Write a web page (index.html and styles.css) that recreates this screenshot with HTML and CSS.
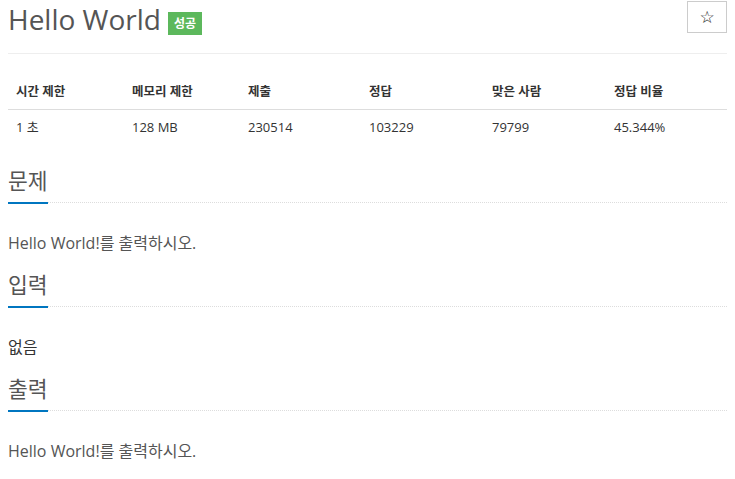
FILE: index.html
```html
<!DOCTYPE html>
<html lang="ko">
<head>
<meta charset="utf-8">
<title>Hello World</title>
<link rel="stylesheet" href="styles.css">
</head>
<body>
<div class="page">
  <div class="page-header">
    <h1 class="title">
      <span class="title-text">Hello World</span>
      <span class="badge">성공</span>
    </h1>
    <button class="star-btn" type="button" aria-label="즐겨찾기">☆</button>
  </div>

  <table class="info-table">
    <colgroup>
      <col class="c1"><col class="c2"><col class="c3"><col class="c4"><col class="c5"><col class="c6">
    </colgroup>
    <thead>
      <tr>
        <th>시간 제한</th>
        <th>메모리 제한</th>
        <th>제출</th>
        <th>정답</th>
        <th>맞은 사람</th>
        <th>정답 비율</th>
      </tr>
    </thead>
    <tbody>
      <tr>
        <td>1 초</td>
        <td>128 MB</td>
        <td>230514</td>
        <td>103229</td>
        <td>79799</td>
        <td>45.344%</td>
      </tr>
    </tbody>
  </table>

  <section class="problem-section">
    <h2 class="headline"><span class="headline-text">문제</span></h2>
    <p class="section-body">Hello World!를 출력하시오.</p>
  </section>
  <section class="problem-section">
    <h2 class="headline"><span class="headline-text">입력</span></h2>
    <p class="section-body dark">없음</p>
  </section>
  <section class="problem-section">
    <h2 class="headline"><span class="headline-text">출력</span></h2>
    <p class="section-body">Hello World!를 출력하시오.</p>
  </section>
</div>
</body>
</html>
```

FILE: styles.css
```css
html, body {
  margin: 0;
  padding: 0;
  background: #fff;
}

body {
  font-family: "Open Sans", "Noto Sans CJK KR", sans-serif;
  color: #555;
}

.page {
  padding: 0 8px;
}

.page-header {
  display: flex;
  justify-content: space-between;
  align-items: flex-start;
  padding-top: 0;
  padding-bottom: 15px;
  border-bottom: 1px solid #eee;
}

.title {
  display: flex;
  align-items: flex-start;
  margin: 0;
  font-size: 28px;
  font-weight: 400;
  line-height: 38px;
  color: #555;
}

.badge {
  margin-top: 12px;
  margin-left: 7px;
  height: 23px;
  line-height: 23px;
  padding: 0 6px;
  background: #5cb85c;
  color: #fff;
  font-size: 12px;
  font-weight: 700;
}

.star-btn {
  margin-top: 1px;
  width: 40px;
  height: 32px;
  padding: 0;
  border: 1px solid #ccc;
  background: #fff;
  color: #222;
  font-family: "DejaVu Sans", sans-serif;
  font-size: 17px;
  line-height: 30px;
  text-align: center;
}

.info-table {
  width: 100%;
  margin-top: 20px;
  margin-bottom: 26px;
  border-collapse: collapse;
  table-layout: fixed;
  font-size: 13px;
}

.c1 { width: 116px; }
.c2 { width: 116px; }
.c3 { width: 121px; }
.c4 { width: 123px; }
.c5 { width: 122px; }
.c6 { width: 121px; }

.info-table th {
  text-align: left;
  padding: 8px;
  font-size: 12.5px;
  font-weight: 700;
  line-height: 19px;
  color: #333;
  border-bottom: 1px solid #ddd;
}

.info-table td {
  padding: 8px;
  line-height: 18px;
  color: #333;
}

.problem-section {
  margin: 0;
}

.headline {
  display: flex;
  margin: 0;
  font-size: 21.5px;
  font-weight: 400;
  border-bottom: 1px dotted #ddd;
}

.headline-text {
  line-height: 22px;
  padding-bottom: 10px;
  border-bottom: 2px solid #0076c0;
  margin-bottom: -2px;
  color: #555;
}

.section-body {
  margin: 29px 0 20px;
  font-size: 16px;
  line-height: 22px;
  color: #555;
}

.section-body.dark {
  color: #333;
}
```
